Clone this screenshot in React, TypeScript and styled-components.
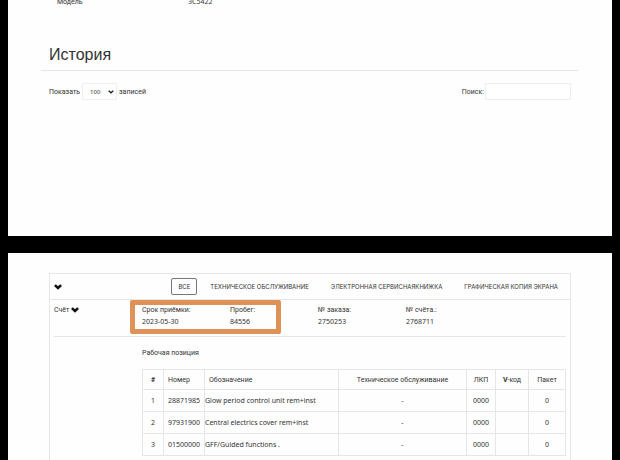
import React from "react";
import styled, { createGlobalStyle, css } from "styled-components";

const GlobalStyle = createGlobalStyle`
  * { box-sizing: border-box; }
  body {
    margin: 0;
    background: #000;
    color: #333;
    font: 7px/12px Roboto, Arial, sans-serif;
  }
  button, input, select { font: inherit; color: inherit; }
`;

const line = "#e6e6e6";
const valueFont = css`
  font-family: "Noto Sans", sans-serif;
`;

const Page = styled.main`
  display: flex;
  flex-direction: column;
  gap: 17px;
  padding: 0 8px;
  min-height: 100vh;
`;

const Sheet = styled.section<{ $grow?: boolean }>`
  background: #fefefe;
  padding: ${(p) => (p.$grow ? "20px 41px 0" : "0 34px 136px 33px")};
  flex: ${(p) => (p.$grow ? 1 : "none")};
  display: flex;
  flex-direction: column;
`;

const ModelRow = styled.dl`
  display: grid;
  grid-template-columns: 131px 1fr;
  align-content: end;
  height: 8px;
  margin: 0;
  padding-left: 16px;
`;

const ModelLabel = styled.dt``;

const ModelValue = styled.dd`
  margin: 0;
  ${valueFont}
`;

const Heading = styled.h1`
  margin: 37px 0 0;
  padding: 0 8px 5px;
  border-bottom: 1px solid ${line};
  font-family: "Liberation Sans", Arial, sans-serif;
  font-size: 16px;
  line-height: 20px;
  font-weight: 400;
`;

const Toolbar = styled.div`
  display: flex;
  justify-content: space-between;
  padding: 12px 7px 0 8px;
`;

const Field = styled.label`
  display: flex;
  align-items: center;
  gap: 1px;
`;

const SelectBox = styled.span`
  display: grid;
  align-items: center;
  width: 35px;
  height: 17px;
  margin: 0 1px;
  border: 1px solid #efefef;

  > * { grid-area: 1 / 1; }
  > svg { justify-self: end; margin-right: 2px; pointer-events: none; }
`;

const Select = styled.select`
  appearance: none;
  width: 100%;
  border: 0;
  padding: 0 0 0 7px;
  background: transparent;
  && { ${valueFont} font-size: 6px; }
`;

const SearchInput = styled.input`
  width: 86px;
  height: 17px;
  border: 1px solid #efefef;
  background: #fff;
  padding: 0 4px;
`;

const Panel = styled.div`
  flex: 1;
  border: 1px solid ${line};
  border-bottom: 0;
`;

const FilterBar = styled.nav`
  display: flex;
  justify-content: space-between;
  align-items: center;
  height: 26px;
  padding: 0 3px 0 4px;
  border-bottom: 1px solid ${line};
`;

const Filters = styled.div`
  display: flex;
  gap: 4px;
`;

const FilterButton = styled.button<{ $active?: boolean }>`
  height: 17px;
  padding: 0 ${(p) => (p.$active ? 6 : 8)}px;
  border: 1px solid ${(p) => (p.$active ? "#777" : "transparent")};
  border-radius: 2px;
  background: none;
  white-space: nowrap;
  && { font-family: Inter, sans-serif; font-size: 6px; }
`;

const IconButton = styled.button`
  display: inline-flex;
  align-items: center;
  gap: 2px;
  padding: 0;
  border: 0;
  background: none;
`;

const Invoice = styled.article`
  padding: 0 4px;
`;

const Summary = styled.header`
  display: grid;
  grid-template-columns: 76px 1fr;
  align-items: start;
  height: 37px;
  border-bottom: 1px solid ${line};
`;

const Toggle = styled(IconButton)`
  margin-top: 4px;
`;

const Facts = styled.dl`
  display: flex;
  margin: 0;
`;

const FactGroup = styled.div<{ $marked?: boolean }>`
  display: flex;
  width: ${(p) => (p.$marked ? "151px" : "auto")};
  height: 34px;
  margin-right: ${(p) => (p.$marked ? "37px" : 0)};
  padding: ${(p) => (p.$marked ? "0 0 0 7px" : "5px 0")};
  border: ${(p) => (p.$marked ? "5px solid #df9258" : 0)};
  border-radius: 2px;
`;

const Fact = styled.div`
  flex: none;
  width: 88px;
  line-height: 11px;
  white-space: nowrap;
`;

const FactName = styled.dt``;

const FactValue = styled.dd`
  margin: 0;
  ${valueFont}
`;

const Positions = styled.section`
  padding: 10px 0 0 88px;
`;

const PositionsTitle = styled.h2`
  margin: 0 0 10px;
  font-size: 7px;
  line-height: 12px;
  font-weight: 400;
`;

const Table = styled.table`
  width: 100%;
  table-layout: fixed;
  border-collapse: collapse;
`;

const Col = styled.col<{ $w?: number }>`
  width: ${(p) => (p.$w ? `${p.$w}px` : "auto")};
`;

const cell = css`
  height: 22px;
  padding: 0;
  border: 1px solid ${line};
  text-align: center;
  white-space: nowrap;
`;

const Th = styled.th<{ $left?: boolean; $bold?: boolean }>`
  ${cell}
  height: 20px;
  font-weight: ${(p) => (p.$bold ? 700 : 400)};
  ${(p) => p.$left && "text-align: left; padding-left: 4px;"}
`;

const Td = styled.td<{ $left?: boolean }>`
  ${cell}
  ${valueFont}
  ${(p) => p.$left && "text-align: left;"}
`;

const Chevron = () => (
  <svg width="8" height="6" viewBox="0 0 8 6" aria-hidden="true">
    <path d="M0 2 1.8 0.3 4 2.2 6.2 0.3 8 2 4 5.8Z" fill="#111" />
  </svg>
);

const SelectArrow = () => (
  <svg width="6" height="4" viewBox="0 0 6 4" aria-hidden="true">
    <path d="M0.7 0.8 3 2.8 5.3 0.8" fill="none" stroke="#222" strokeWidth="1.4" />
  </svg>
);

const filters = [
  "ВСЕ",
  "ТЕХНИЧЕСКОЕ ОБСЛУЖИВАНИЕ",
  "ЭЛЕКТРОННАЯ СЕРВИСНАЯКНИЖКА",
  "ГРАФИЧЕСКАЯ КОПИЯ ЭКРАНА",
];

const visit = [
  ["Срок приёмки:", "2023-05-30"],
  ["Пробег:", "84556"],
];

const numbers = [
  ["№ заказа:", "2750253"],
  ["№ счёта.:", "2768711"],
];

const rows = [
  ["1", "28871985", "Glow period control unit rem+inst"],
  ["2", "97931900", "Central electrics cover rem+inst"],
  ["3", "01500000", "GFF/Guided functions ."],
];

function FactList({ items }: { items: string[][] }) {
  return (
    <>
      {items.map(([name, value]) => (
        <Fact key={name}>
          <FactName>{name}</FactName>
          <FactValue>{value}</FactValue>
        </Fact>
      ))}
    </>
  );
}

export default function App() {
  return (
    <>
      <GlobalStyle />
      <Page>
        <Sheet>
          <ModelRow>
            <ModelLabel>Модель</ModelLabel>
            <ModelValue>3C5422</ModelValue>
          </ModelRow>
          <Heading>История</Heading>
          <Toolbar>
            <Field>
              Показать
              <SelectBox>
                <Select defaultValue="100" aria-label="Показать записей">
                  <option>100</option>
                </Select>
                <SelectArrow />
              </SelectBox>
              записей
            </Field>
            <Field>
              Поиск:
              <SearchInput type="search" />
            </Field>
          </Toolbar>
        </Sheet>

        <Sheet $grow>
          <Panel>
            <FilterBar>
              <IconButton aria-label="Развернуть">
                <Chevron />
              </IconButton>
              <Filters>
                {filters.map((name, i) => (
                  <FilterButton key={name} $active={i === 0}>
                    {name}
                  </FilterButton>
                ))}
              </Filters>
            </FilterBar>
            <Invoice>
              <Summary>
                <Toggle>
                  Счёт <Chevron />
                </Toggle>
                <Facts>
                  <FactGroup $marked>
                    <FactList items={visit} />
                  </FactGroup>
                  <FactGroup>
                    <FactList items={numbers} />
                  </FactGroup>
                </Facts>
              </Summary>
              <Positions>
                <PositionsTitle>Рабочая позиция</PositionsTitle>
                <Table>
                  <colgroup>
                    <Col $w={21} />
                    <Col $w={41} />
                    <Col />
                    <Col $w={128} />
                    <Col $w={29} />
                    <Col $w={33} />
                    <Col $w={37} />
                  </colgroup>
                  <thead>
                    <tr>
                      <Th $bold>#</Th>
                      <Th $left>Номер</Th>
                      <Th $left>Обозначение</Th>
                      <Th>Техническое обслуживание</Th>
                      <Th>ЛКП</Th>
                      <Th>
                        <b>V</b>-код
                      </Th>
                      <Th>Пакет</Th>
                    </tr>
                  </thead>
                  <tbody>
                    {rows.map(([index, number, title]) => (
                      <tr key={index}>
                        <Td>{index}</Td>
                        <Td>{number}</Td>
                        <Td $left>{title}</Td>
                        <Td>-</Td>
                        <Td>0000</Td>
                        <Td />
                        <Td>0</Td>
                      </tr>
                    ))}
                  </tbody>
                </Table>
              </Positions>
            </Invoice>
          </Panel>
        </Sheet>
      </Page>
    </>
  );
}
